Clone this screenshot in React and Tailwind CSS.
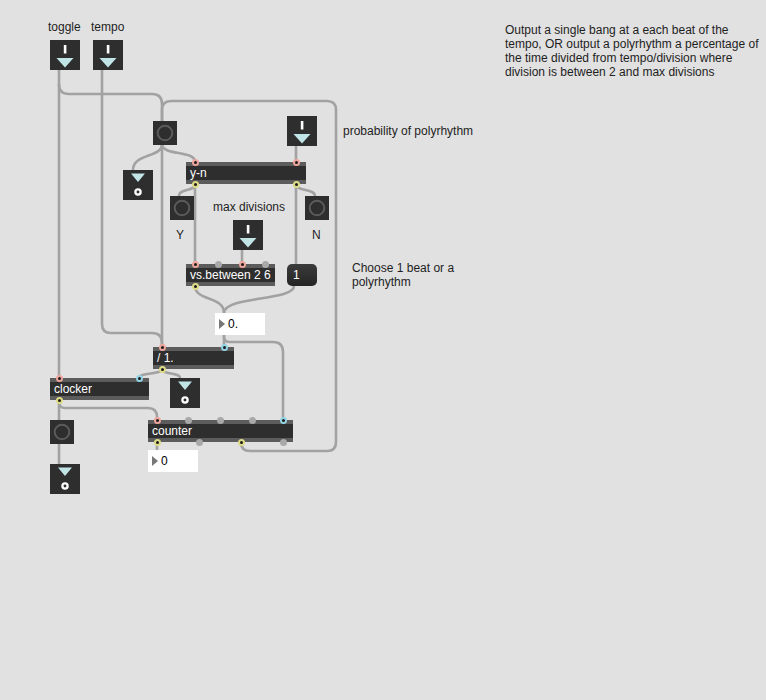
import React from 'react';

const cords = [
  // toggle -> clocker
  'M59 70 V378',
  // toggle -> / 1.
  'M59 84 Q59 94 69 94 H152 Q162 94 162 104 V347',
  // tempo -> / 1.
  'M102 70 V324 Q102 333 111 333 H152 Q162 333 162 343 V347',
  // counter -> bang (feedback loop)
  'M241 442 V442 Q241 451 250 451 H327 Q336 451 336 442 V110 Q336 101 327 101 H171 Q162 101 162 110 V121',
  // bang -> outlet, bang -> y-n
  'M162 144 C162 158 133 153 133 170',
  'M162 144 C162 156 195 150 195 162',
  // probability -> y-n
  'M296 146 V162',
  // y-n -> Y / vs.between
  'M195 184 C195 192 179 188 179 196',
  'M195 184 V264',
  // y-n -> N / message
  'M296 184 C296 192 315 188 315 196',
  'M296 184 V264',
  // max divisions -> vs.between
  'M242 250 V264',
  // vs.between / message -> float
  'M195 286 C195 301 224 296 224 313',
  'M294 286 C294 301 224 296 224 313',
  // float -> / 1. and counter
  'M224 335 V347',
  'M224 335 V337 Q224 342 230 342 H273 Q283 342 283 352 V420',
  // / 1. -> clocker, outlet
  'M162 369 C162 375 139 372 139 378',
  'M162 369 C162 375 180 372 180 378',
  // clocker -> bang, counter
  'M59 399 V420',
  'M59 399 V402 Q59 408 65 408 H148 Q157 408 157 417 V420',
  'M59 444 V464',
  // counter -> number
  'M157 442 V450',
];

const portColor = {
  r: 'border-2 border-[#eea59c] bg-[#1c1c1c]',
  y: 'border-2 border-[#dedb86] bg-[#1c1c1c]',
  b: 'border-2 border-[#92d3e4] bg-[#1c1c1c]',
  g: 'bg-[#a9a9a9]',
};

function Port({ x, kind, out }) {
  return (
    <span
      className={`absolute w-[7px] h-[7px] rounded-full ${portColor[kind]} ${out ? 'bottom-[-7.5px]' : 'top-[-7.5px]'}`}
      style={{ left: x - 3.5 }}
    />
  );
}

function Obj({ className, text, ins = [], outs = [] }) {
  return (
    <div className={`absolute h-[22px] bg-[#2e2e2e] border-y-4 border-[#5c5c5c] ${className}`}>
      <div className="pl-[4px] text-[12px] leading-[14px] text-white whitespace-nowrap">{text}</div>
      {ins.map(([x, k]) => (
        <Port key={'i' + x} x={x} kind={k} />
      ))}
      {outs.map(([x, k]) => (
        <Port key={'o' + x} x={x} kind={k} out />
      ))}
    </div>
  );
}

function InletBox({ className }) {
  return (
    <div className={`absolute w-[30px] h-[30px] bg-[#2e2e2e] ${className}`}>
      <svg width="30" height="30" className="block">
        <rect x="13.8" y="5" width="2.6" height="8.5" fill="#ffffff" />
        <polygon points="6.5,18 23.5,18 15,27.5" fill="#c1e4e7" />
      </svg>
    </div>
  );
}

function OutletBox({ className }) {
  return (
    <div className={`absolute w-[30px] h-[30px] bg-[#2e2e2e] ${className}`}>
      <svg width="30" height="30" className="block">
        <polygon points="8,3.5 22,3.5 15,12" fill="#c1e4e7" />
        <circle cx="15" cy="22" r="2.6" fill="none" stroke="#ffffff" strokeWidth="2.3" />
      </svg>
    </div>
  );
}

function Bang({ className }) {
  return (
    <div className={`absolute w-[24px] h-[24px] bg-[#2e2e2e] ${className}`}>
      <svg width="24" height="24" className="block">
        <circle cx="12" cy="12" r="7.3" fill="none" stroke="#5b5b5b" strokeWidth="2" />
      </svg>
    </div>
  );
}

function NumBox({ className, value }) {
  return (
    <div className={`absolute h-[22px] w-[50px] bg-white flex items-center ${className}`}>
      <svg width="10" height="22" className="block ml-[3px]">
        <polygon points="1,6 7,11 1,16" fill="#777777" />
      </svg>
      <span className="text-[12px] leading-[14px] text-black">{value}</span>
    </div>
  );
}

function Label({ className, children }) {
  return (
    <div className={`absolute text-[12px] leading-[14px] text-[#1e1e1e] whitespace-nowrap ${className}`}>
      {children}
    </div>
  );
}

export default function App() {
  return (
    <div className="relative w-[766px] h-[700px] bg-[#e1e1e1] overflow-hidden font-['Liberation_Sans',Arial,sans-serif]">
      <svg width="766" height="700" className="absolute left-0 top-0">
        {cords.map((d, i) => (
          <path key={i} d={d} fill="none" stroke="#a2a2a2" strokeWidth="2.6" />
        ))}
      </svg>

      <Label className="left-[48px] top-[20px]">toggle</Label>
      <Label className="left-[91px] top-[20px]">tempo</Label>
      <InletBox className="left-[50px] top-[40px]" />
      <InletBox className="left-[93px] top-[40px]" />

      <Bang className="left-[153px] top-[121px]" />
      <InletBox className="left-[287px] top-[116px]" />
      <Label className="left-[343px] top-[124px]">probability of polyrhythm</Label>

      <OutletBox className="left-[123px] top-[170px]" />
      <Obj
        className="left-[186px] top-[162px] w-[120px]"
        text="y-n"
        ins={[[9, 'r'], [110, 'r']]}
        outs={[[9, 'y'], [110, 'y']]}
      />

      <Bang className="left-[170px] top-[196px]" />
      <Bang className="left-[305px] top-[196px]" />
      <Label className="left-[213px] top-[200px]">max divisions</Label>
      <Label className="left-[176px] top-[228px]">Y</Label>
      <Label className="left-[312px] top-[228px]">N</Label>
      <InletBox className="left-[233px] top-[220px]" />

      <Obj
        className="left-[186px] top-[264px] w-[89px]"
        text="vs.between 2 6"
        ins={[[9, 'r'], [32, 'g'], [56, 'r'], [79, 'g']]}
        outs={[[9, 'y']]}
      />
      <div className="absolute left-[287px] top-[264px] w-[30px] h-[22px] rounded-[5px] bg-gradient-to-b from-[#3c3c3c] to-[#242424] text-white text-[12px] leading-[22px] pl-[6px]">
        1
      </div>
      <Label className="left-[352px] top-[261px] leading-[13.4px]">
        Choose 1 beat or a<br />polyrhythm
      </Label>

      <NumBox className="left-[215px] top-[313px]" value="0." />

      <Obj
        className="left-[153px] top-[347px] w-[81px]"
        text="/ 1."
        ins={[[9, 'r'], [71, 'b']]}
        outs={[[9, 'y']]}
      />
      <Obj
        className="left-[50px] top-[378px] w-[99px] h-[21px]"
        text="clocker"
        ins={[[9, 'r'], [89, 'b']]}
        outs={[[9, 'y']]}
      />
      <OutletBox className="left-[170px] top-[378px]" />

      <Bang className="left-[50px] top-[420px]" />
      <Obj
        className="left-[148px] top-[420px] w-[145px]"
        text="counter"
        ins={[[9, 'r'], [40, 'g'], [72, 'g'], [104, 'g'], [135, 'b']]}
        outs={[[9, 'y'], [51, 'g'], [93, 'y'], [135, 'g']]}
      />
      <NumBox className="left-[148px] top-[450px]" value="0" />
      <OutletBox className="left-[50px] top-[464px]" />

      <Label className="left-[505px] top-[23px] leading-[13.4px]">
        Output a single bang at a each beat of the
        <br />
        tempo, OR output a polyrhythm a percentage of
        <br />
        the time divided from tempo/division where
        <br />
        division is between 2 and max divisions
      </Label>
    </div>
  );
}
